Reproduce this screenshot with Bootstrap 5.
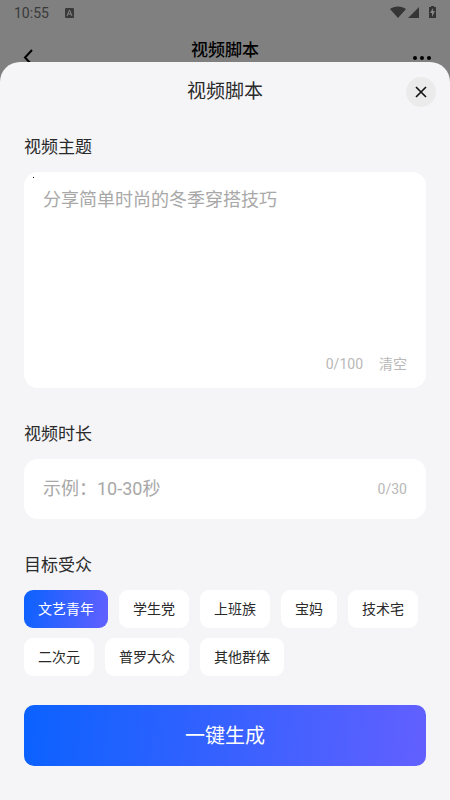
<!DOCTYPE html>
<html lang="zh-CN">
<head>
<meta charset="utf-8">
<meta name="viewport" content="width=device-width, initial-scale=1">
<title>视频脚本</title>
<link href="https://cdn.jsdelivr.net/npm/bootstrap@5.3.0/dist/css/bootstrap.min.css" rel="stylesheet">
<style>
body { background: #808080; font-family: Roboto, "Noto Sans CJK SC", sans-serif; color: #2a2a2a; }
.status-bar { height: 26px; padding: 0 14px; font-size: 14px; color: #3a3a3a; }
.app-bar { height: 48px; padding: 0 18px; color: #000; }
.app-title { font-size: 17px; line-height: 48px; font-weight: 500; }
.bar-side { width: 28px; padding-top: 22px; }
.sheet { margin-top: -12px; background: #f5f5f8; border-radius: 20px 20px 0 0; padding: 12px 24px 33px; }
.sheet-head { margin: 0 -10px; }
.sheet-title { font-size: 19px; line-height: 36px; font-weight: 400; }
.head-side { width: 30px; height: 30px; }
.close-btn, .close-btn:hover { background: #ebebec; color: #111; }
.field-label { font-size: 17px; line-height: 24px; margin: 34px 0 13px; }
.first-label { margin-top: 25px; }
.panel { background: #fff; border-radius: 14px; padding: 14px 19px; }
.topic-panel { height: 216px; }
.speck::before { content: ""; position: absolute; left: 9px; top: 5px; width: 1px; height: 1px; background: #000; }
.plain { background: transparent; font-size: 18px; line-height: 28px; color: #2a2a2a; resize: none; outline: 0; min-width: 0; }
.plain::placeholder { color: #a8a8a8; opacity: 1; }
.hint, .hint:hover { font-size: 14px; line-height: 20px; color: #b8b8b8; }
.duration-panel { height: 60px; }
.chips { gap: 10px 11px; }
.chip { height: 38px; border-radius: 9px; padding: 0 14px; font-size: 14px; background: #fff; cursor: pointer; }
.btn-check:checked + .chip { background: linear-gradient(100deg, #0b62ff, #6260ff); color: #fff; }
.submit, .submit:hover { height: 61px; margin-top: 29px; border-radius: 10px; background: linear-gradient(95deg, #0b62ff, #6260ff); color: #fff; font-size: 20px; }
</style>
<script src="https://cdn.jsdelivr.net/npm/bootstrap@5.3.0/dist/js/bootstrap.bundle.min.js"></script>
</head>
<body class="d-flex flex-column min-vh-100">
<div class="status-bar d-flex align-items-center justify-content-between">
  <div class="d-flex align-items-center">
    <span>10:55</span>
    <svg class="ms-3" width="9" height="10" viewBox="0 0 9 10" aria-hidden="true"><rect width="9" height="10" rx="1" fill="#3a3a3a"/><path d="M2 8 4.5 2 7 8M3 6h3" fill="none" stroke="#858585"/></svg>
  </div>
  <svg width="46" height="14" viewBox="0 0 46 14" fill="#353535" aria-hidden="true"><path d="M0 3C4 -0.5 12 -0.5 16 3L8 12ZM29 1v11H18ZM39 1h2V-1h3v2h2v11h-7Z"/><path d="m43 2-3 5h2v4l3-6h-2Z" fill="#868686"/></svg>
</div>
<header class="app-bar d-flex justify-content-between">
  <button class="btn px-1 pb-0 border-0 bar-side d-flex align-items-start" type="button" aria-label="返回"><svg width="12" height="18" viewBox="0 0 12 18" fill="none" stroke="#000" stroke-width="2"><path d="m10 2-7 7.500 7 7.500"/></svg></button>
  <div class="app-title">视频脚本</div>
  <button class="btn px-0 pb-0 border-0 bar-side d-flex align-items-start justify-content-end" type="button" aria-label="更多"><svg width="20" height="20" viewBox="0 0 20 20"><circle cx="3" cy="10" r="2"/><circle cx="10" cy="10" r="2"/><circle cx="17" cy="10" r="2"/></svg></button>
</header>
<main class="sheet flex-grow-1 position-relative">
  <div class="sheet-head d-flex align-items-center justify-content-between">
    <span class="head-side" aria-hidden="true"></span>
    <h1 class="sheet-title m-0">视频脚本</h1>
    <button class="head-side close-btn btn rounded-circle border-0 p-0 d-flex align-items-center justify-content-center" type="button" aria-label="关闭"><svg width="12" height="12" viewBox="0 0 12 12" stroke="currentColor" stroke-width="1.6"><path d="m1 1 10 10M11 1 1 11"/></svg></button>
  </div>
  <form class="d-flex flex-column">
    <label class="field-label first-label" for="topic">视频主题</label>
    <div class="panel topic-panel speck position-relative d-flex flex-column">
      <textarea class="plain border-0 p-0 w-100 flex-grow-1" id="topic" maxlength="100" placeholder="分享简单时尚的冬季穿搭技巧"></textarea>
      <div class="hint d-flex justify-content-end gap-3"><span>0/100</span><button class="hint btn border-0 p-0" type="reset">清空</button></div>
    </div>
    <label class="field-label" for="duration">视频时长</label>
    <div class="panel duration-panel d-flex align-items-center">
      <input class="plain border-0 p-0 flex-grow-1" id="duration" type="text" maxlength="30" placeholder="示例：10-30秒">
      <span class="hint">0/30</span>
    </div>
    <fieldset>
      <legend class="field-label">目标受众</legend>
      <div class="chips d-flex flex-wrap">
        <input class="btn-check" type="radio" name="audience" id="a1" checked><label class="chip d-flex align-items-center" for="a1">文艺青年</label>
        <input class="btn-check" type="radio" name="audience" id="a2"><label class="chip d-flex align-items-center" for="a2">学生党</label>
        <input class="btn-check" type="radio" name="audience" id="a3"><label class="chip d-flex align-items-center" for="a3">上班族</label>
        <input class="btn-check" type="radio" name="audience" id="a4"><label class="chip d-flex align-items-center" for="a4">宝妈</label>
        <input class="btn-check" type="radio" name="audience" id="a5"><label class="chip d-flex align-items-center" for="a5">技术宅</label>
        <input class="btn-check" type="radio" name="audience" id="a6"><label class="chip d-flex align-items-center" for="a6">二次元</label>
        <input class="btn-check" type="radio" name="audience" id="a7"><label class="chip d-flex align-items-center" for="a7">普罗大众</label>
        <input class="btn-check" type="radio" name="audience" id="a8"><label class="chip d-flex align-items-center" for="a8">其他群体</label>
      </div>
    </fieldset>
    <button class="submit btn border-0 w-100" type="submit">一键生成</button>
  </form>
</main>
</body>
</html>
